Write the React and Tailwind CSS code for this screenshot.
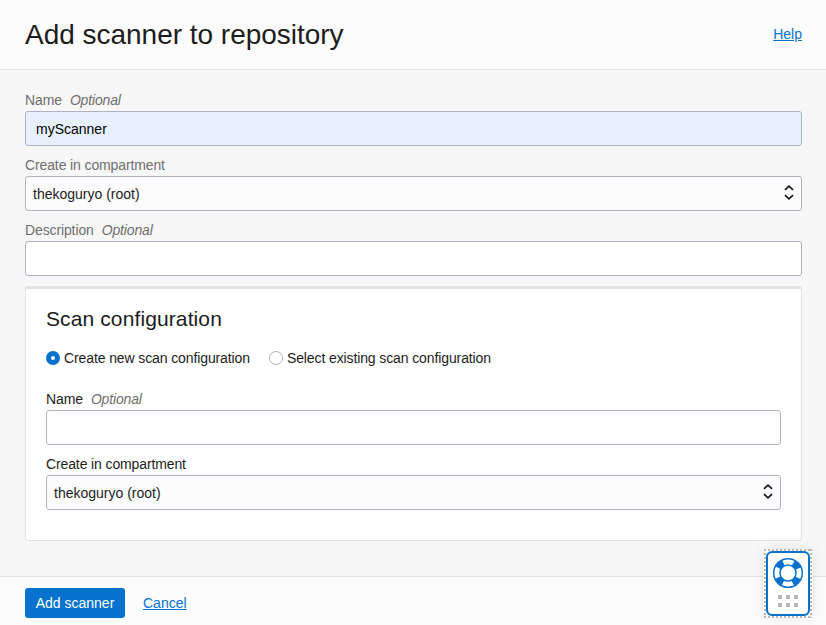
function FieldLabel({ text, optional, className = "" }) {
  return (
    <label className={`flex h-5 items-start gap-2 pt-px leading-[16px] tracking-[-0.12px] ${className}`}>
      <span>{text}</span>
      {optional && <em className="tracking-[-0.15px] text-[#6f6f6f]">Optional</em>}
    </label>
  );
}

function TextField({ value, className = "bg-white" }) {
  return (
    <input
      type="text"
      defaultValue={value}
      className={`block h-[35px] w-full rounded-[3px] border border-[#aeb3c0] px-[10px] text-black outline-none ${className}`}
    />
  );
}

function SelectField({ value }) {
  return (
    <button
      type="button"
      className="flex h-[35px] w-full items-center justify-between rounded-[3px] border border-[#aeb3c0] bg-[#fcfcfc] pr-[7px] pl-[7px] text-[#1c1c1c]"
    >
      <span className="pt-[2px]">{value}</span>
      <svg width="10" height="15" viewBox="0 0 10 15" className="-mt-[2px]" fill="none" stroke="#161616" strokeWidth="1.7">
        <path d="M1 4.8 5 1.2l4 3.6M1 10.2l4 3.6 4-3.6" />
      </svg>
    </button>
  );
}

function Radio({ label, checked }) {
  return (
    <label className="flex items-center gap-1">
      <span
        className={`block size-[14px] rounded-full bg-white ${
          checked ? "border-[5px] border-[#0572ce]" : "border border-[#aeb3c0]"
        }`}
      />
      <span className="tracking-[-0.11px]">{label}</span>
    </label>
  );
}

function HelpWidget() {
  return (
    <div className="absolute top-[549px] left-[764px] h-[69px] w-12 shadow-[0_0_14px_rgba(0,0,0,0.07)]">
      <svg width="48" height="69" viewBox="0 0 48 69" className="block">
        <rect width="48" height="69" fill="#fafafa" />
        <g stroke="#b9b9b9" strokeWidth="2" strokeDasharray="2 2">
          <path d="M0 1h48M0 68h48M1 0v69M47 0v69" />
        </g>
        <rect x="3" y="3" width="42" height="63" rx="5" fill="#fff" stroke="#0572ce" strokeWidth="2" />
        <g fill="none" stroke="#0572ce">
          <circle cx="24" cy="24" r="14.3" strokeWidth="1.5" />
          <circle cx="24" cy="24" r="8" strokeWidth="1.5" />
          <circle cx="24" cy="24" r="11.2" strokeWidth="6.5" strokeDasharray="7.4 10.193" strokeDashoffset="-5.096" />
        </g>
        <path
          d="M14 46h4v4h-4zM22 46h4v4h-4zM30 46h4v4h-4zM14 54h4v4h-4zM22 54h4v4h-4zM30 54h4v4h-4z"
          fill="#b3b6be"
        />
      </svg>
    </div>
  );
}

export default function App() {
  return (
    <div className="relative flex h-[625px] w-[826px] flex-col overflow-hidden bg-[#f7f7f7] font-['Liberation_Sans',Arial,sans-serif] text-[14px] text-[#1c1c1c]">
      <header className="flex h-[70px] shrink-0 items-center justify-between border-b border-[#e3e3e3] bg-[#fcfcfc] pr-6 pl-[25px]">
        <h1 className="text-[28px] leading-[36px] tracking-[-0.02px]">Add scanner to repository</h1>
        <a href="#help" className="text-[#0572ce] underline">
          Help
        </a>
      </header>

      <main className="flex-1 pt-[21px] pr-6 pl-[25px]">
        <div className="flex flex-col gap-[10px]">
          <div>
            <FieldLabel text="Name" optional className="text-[#6f6f6f]" />
            <TextField value="myScanner" className="bg-[#e8f0fe]" />
          </div>
          <div>
            <FieldLabel text="Create in compartment" className="text-[#6f6f6f]" />
            <SelectField value="thekoguryo (root)" />
          </div>
          <div>
            <FieldLabel text="Description" optional className="text-[#6f6f6f]" />
            <TextField />
          </div>

          <section className="h-[255px] rounded-[3px] border border-t-[3px] border-[#e1e2e5] bg-white px-5 pt-4">
            <h2 className="text-[21px] leading-7 tracking-[0.11px]">Scan configuration</h2>
            <div className="mt-[15px] flex h-5 items-center gap-[19px]">
              <Radio label="Create new scan configuration" checked />
              <Radio label="Select existing scan configuration" />
            </div>
            <div className="mt-[22px] flex flex-col gap-[10px]">
              <div>
                <FieldLabel text="Name" optional />
                <TextField />
              </div>
              <div>
                <FieldLabel text="Create in compartment" />
                <SelectField value="thekoguryo (root)" />
              </div>
            </div>
          </section>
        </div>
      </main>

      <footer className="flex h-[49px] shrink-0 items-center gap-[18px] border-t border-[#e3e3e3] bg-[#fcfcfc] pt-1 pl-[25px]">
        <button type="button" className="h-[30px] w-[100px] rounded-[3px] bg-[#0572ce] text-white">
          Add scanner
        </button>
        <a href="#cancel" className="text-[#0572ce] underline">
          Cancel
        </a>
      </footer>

      <HelpWidget />
    </div>
  );
}
